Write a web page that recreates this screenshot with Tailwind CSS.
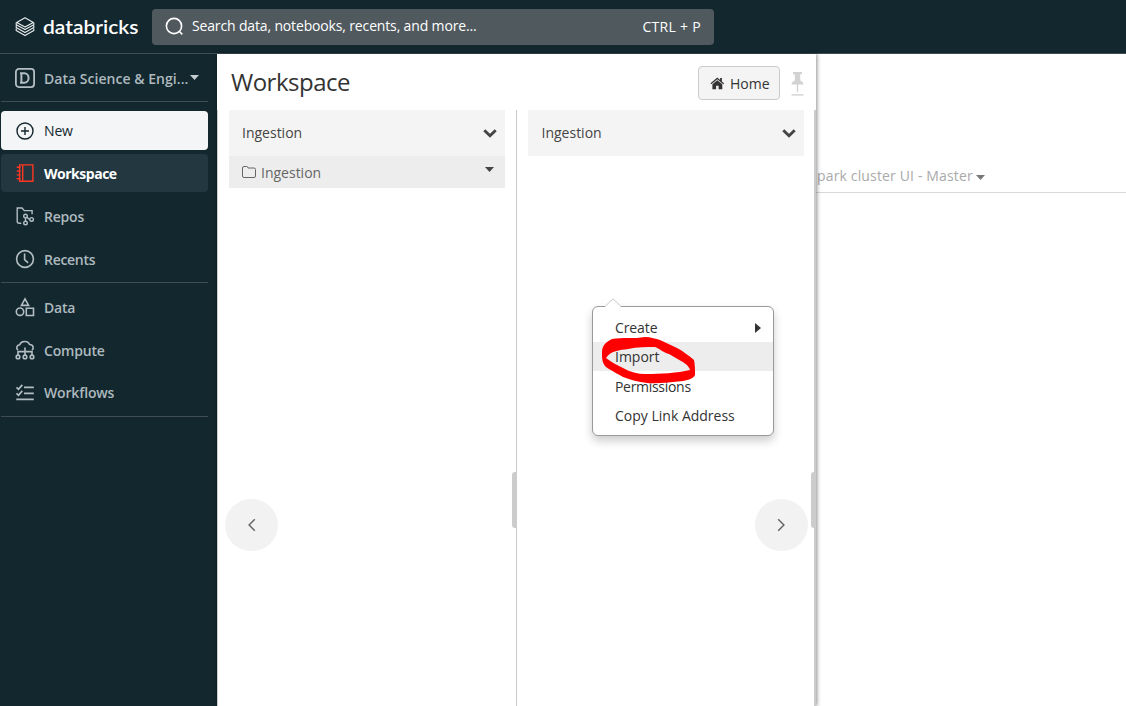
<!DOCTYPE html>
<html lang="en">
<head>
<meta charset="utf-8">
<title>Databricks Workspace</title>
<script src="https://cdn.jsdelivr.net/npm/@tailwindcss/browser@4"></script>
</head>
<body class="w-[1126px] h-[706px] overflow-hidden bg-white flex flex-col font-['Open_Sans','Noto_Sans',sans-serif] text-[14px] leading-5 text-[#333]">

<header class="h-[54px] shrink-0 bg-[#13272e] border-b border-[#3d4d53] flex items-start">
  <div class="w-[152px] h-[53px] pl-[15px] flex items-center gap-[8px]">
    <svg class="w-5 h-5 shrink-0" viewBox="0 0 20 20" fill="none" stroke="#e8ecee" stroke-width="1.15" stroke-linejoin="round">
      <path d="M10 .8 18.3 5.4 10 10 1.7 5.4Z"/>
      <path d="M1.2 5.5v2.3l8.8 4.8 8.8-4.8V5.5M1.2 8.4v2.2L10 15.4l8.8-4.8V8.4M1.2 11.4v2.2L10 18.6l8.8-5v-2.2"/>
    </svg>
    <svg class="w-[98px] h-[30px] shrink-0" viewBox="0 0 98 30"><text x="0" y="22" textLength="95.5" lengthAdjust="spacingAndGlyphs" fill="#fff" font-family="Lato, sans-serif" font-weight="600" font-size="20">databricks</text></svg>
  </div>
  <div class="mt-[9px] w-[562px] h-[36px] rounded-[4px] bg-[#50595e] flex items-center pl-[13px] pr-[13px] text-white">
    <svg class="w-[19px] h-[19px] shrink-0 -mt-[2px]" viewBox="0 0 19 19" fill="none" stroke="#fff" stroke-width="1.6"><circle cx="9" cy="9" r="7.6"/><path d="M14.2 14.2 17.3 17.4"/></svg>
    <span class="ml-[8px] -mt-[2px] tracking-[-0.15px] whitespace-nowrap">Search data, notebooks, recents, and more...</span>
    <span class="ml-auto -mt-px whitespace-nowrap tracking-[0.3px]">CTRL + P</span>
  </div>
</header>

<div class="flex-1 flex min-h-0">
  <aside class="w-[217px] shrink-0 bg-[#13272e] pl-px pr-[9px] text-[#adb9be] font-semibold">
    <div class="h-[48px] border-b border-[#3d4d53] pl-[14px] flex items-center">
      <svg class="w-5 h-5 shrink-0" viewBox="0 0 20 20" fill="none" stroke="#b3bec3"><rect x=".9" y=".9" width="18.2" height="18.2" rx="3" stroke-width="1.8"/><path d="M6.4 5.2h3a4.2 4.8 0 0 1 0 9.6h-3zM5 5.2h2M5 14.8h2" stroke-width="2"/></svg>
      <span class="ml-[9px] mt-[2px] w-[144px] tracking-[0.03px] whitespace-nowrap">Data Science &amp; Engi...</span>
      <svg class="w-[9px] h-[5px] ml-[2px] shrink-0" viewBox="0 0 9 5"><path d="M0 0h9L4.5 5z" fill="#c4ccd0"/></svg>
    </div>
    <nav class="pt-[9px]">
      <div class="h-[39px] rounded-[4px] bg-[#f4f5f7] text-[#13272e] pl-[14px] flex items-center gap-[9px]">
        <svg class="w-5 h-5" viewBox="0 0 20 20" fill="none" stroke="#13272e" stroke-width="1.4"><circle cx="10" cy="10" r="8"/><path d="M10 6v8M6 10h8"/></svg><span class="tracking-[-0.15px] font-medium">New</span>
      </div>
      <div class="mt-1 h-[38px] rounded-[4px] bg-[#223740] text-white font-bold pl-[14px] flex items-center gap-[9px]">
        <svg class="w-5 h-5" viewBox="0 0 20 20" fill="none" stroke="#ff3621" stroke-width="1.4"><path d="M4.6 1.9h13.3v16.3H4.6zM7.7 1.9v16.3M1.7 4.3h4M1.7 8.1h4M1.7 11.9h4M1.7 15.7h4"/></svg><span class="relative top-px tracking-[-0.48px]">Workspace</span>
      </div>
      <div class="mt-[5px] h-[38px] pl-[14px] flex items-center gap-[9px]">
        <svg class="w-5 h-5" viewBox="0 0 20 20" fill="none" stroke="#b3bec3" stroke-width="1.4"><path d="M6.3 17.3H4.2a2 2 0 0 1-2-2V2h4.9l2.2 2.6h7.8v3.6"/><circle cx="10.5" cy="10.1" r="1.8"/><circle cx="10.5" cy="17" r="1.8"/><circle cx="16.6" cy="13.4" r="1.8"/><path d="M10.5 11.9v3.3M12 11.2c.8 1.3 1.6 2 2.9 2.2"/></svg><span class="relative top-px tracking-[-0.2px]">Repos</span>
      </div>
      <div class="mt-[5px] h-[38px] pl-[14px] flex items-center gap-[9px]">
        <svg class="w-5 h-5" viewBox="0 0 20 20" fill="none" stroke="#b3bec3" stroke-width="1.6"><circle cx="10" cy="10" r="8.4"/><path d="M9.6 4.6v6l3.5 3.3"/></svg><span class="relative top-px tracking-[-0.3px]">Recents</span>
      </div>
    </nav>
    <div class="mt-[4px] border-t border-[#3d4d53] pt-[5px]">
      <div class="h-[38px] pl-[14px] flex items-center gap-[9px]">
        <svg class="w-5 h-5" viewBox="0 0 20 20" fill="none" stroke="#b3bec3" stroke-width="1.6"><path d="M10 1.8 13.6 8.4H6.4Z"/><circle cx="5" cy="14.7" r="3.7"/><path d="M11.3 11.3h7.2v7.2h-7.2z"/></svg><span class="relative top-px tracking-[-0.2px]">Data</span>
      </div>
      <div class="mt-[5px] h-[38px] pl-[14px] flex items-center gap-[9px]">
        <svg class="w-5 h-5" viewBox="0 0 20 20" fill="none" stroke="#b3bec3" stroke-width="1.6"><path d="M3 10.2C.8 8.6 1.6 5 4.7 4.8 6 1 12.6.1 14.6 4.5c3.8-.2 4.5 4.1 2.4 5.7"/><path d="M10 7.5v8M3 15.2v-3.6h14v3.6"/><circle cx="3" cy="16.9" r="1.8"/><circle cx="10" cy="16.9" r="1.8"/><circle cx="17" cy="16.9" r="1.8"/></svg><span class="relative top-px tracking-[-0.18px]">Compute</span>
      </div>
      <div class="mt-[5px] h-[38px] pl-[14px] flex items-center gap-[9px]">
        <svg class="w-5 h-5" viewBox="0 0 20 20" fill="none" stroke="#b3bec3" stroke-width="1.7"><path d="m1.5 4.3 2 2L7.3 1.9M1.5 10.3l2 2 3.8-4.4M9 4.3h9.8M9 10.3h9.8M1.3 16.4h17.5"/></svg><span class="tracking-[-0.15px]">Workflows</span>
      </div>
    </div>
    <div class="mt-[4px] border-t border-[#3d4d53]"></div>
  </aside>

  <main class="w-[599px] shrink-0 relative z-10 bg-white flex flex-col shadow-[1px_0_4px_rgba(0,0,0,0.45)]">
    <div class="h-[56px] shrink-0 flex items-center pl-[14px] pr-[12px]">
      <h1 class="text-[24px] leading-8 tracking-[-0.5px] font-normal">Workspace</h1>
      <button class="ml-auto mt-[2px] w-[82px] h-[34px] rounded-[4px] border border-[#ccc] bg-[#f4f4f4] flex items-center pl-[11px] gap-[6px]">
        <svg class="w-[15px] h-[13px]" viewBox="0 0 15 13" fill="#333"><path d="M7.3 3.2 2.4 7.3v4.9h3.7V8.8h2.5v3.4h3.7V7.3Z"/><path d="M7.3.6.5 6.3l.8.9 6-5 6 5 .8-.9-2.2-1.9V1.1h-1.8v1.8Z"/></svg>
        <span class="relative top-px -left-px">Home</span>
      </button>
      <svg class="w-[13px] h-[26px] ml-[11px] mt-[3px]" viewBox="0 0 13 26" fill="#d2d2d2"><path d="M2 1h9v2.2H9.2v6.2c2 .8 3.3 2.2 3.3 4.2H7.2v7.6H5.8v-7.6H.5c0-2 1.3-3.4 3.3-4.2V3.2H2z"/><path d="M.5 23.2h12v1.4H.5z"/></svg>
    </div>
    <div class="flex-1 flex">
      <section class="w-[300px] border-l border-r border-[#ccc] pl-[11px] pr-[11px]">
        <div class="h-[46px] bg-[#f4f4f4] flex items-center justify-between pl-[13px] pr-[8px] text-[#444]"><span>Ingestion</span>
          <svg class="w-[14px] h-[9px] mt-px" viewBox="0 0 14 9" fill="none" stroke="#444" stroke-width="2.9"><path d="m1.3 1.2 5.7 5.5 5.7-5.5"/></svg></div>
        <div class="h-[32px] bg-[#ededed] flex items-center pl-[13px] pr-[11px] text-[#666]">
          <svg class="w-[14px] h-[12px]" viewBox="0 0 14 12" fill="none" stroke="#666"><path d="M.5 2Q.5.5 2 .5h2.5Q6 .5 6 2h6q1.5 0 1.5 1.5V10q0 1.5-1.5 1.5H2Q.5 11.5.5 10Z"/></svg>
          <span class="ml-[5px] mt-[2px]">Ingestion</span>
          <svg class="w-[9px] h-[5px] ml-auto -mt-[5px]" viewBox="0 0 9 5"><path d="M0 0h9L4.5 5z" fill="#444"/></svg>
        </div>
      </section>
      <section class="w-[299px] border-r-2 border-[#ccc] pl-[11px] pr-[10px]">
        <div class="h-[46px] bg-[#f4f4f4] flex items-center justify-between pl-[13.5px] pr-[8px] text-[#444]"><span>Ingestion</span>
          <svg class="w-[14px] h-[9px] mt-px" viewBox="0 0 14 9" fill="none" stroke="#444" stroke-width="2.9"><path d="m1.3 1.2 5.7 5.5 5.7-5.5"/></svg></div>
      </section>
    </div>

    <div class="absolute left-[295px] top-[418px] w-[5px] h-[56px] rounded-l-[3px] bg-[#ccc]"></div>
    <div class="absolute left-[594px] top-[418px] w-[5px] h-[56px] rounded-l-[3px] bg-[#ccc]"></div>
    <div class="absolute left-[8px] top-[445px] w-[53px] h-[52px] rounded-full bg-[#f2f2f2] flex items-center justify-center"><svg class="w-[9px] h-[14px]" viewBox="0 0 9 14" fill="none" stroke="#666" stroke-width="1.5"><path d="M7.8 1.2 2.1 7l5.7 5.8"/></svg></div>
    <div class="absolute left-[538px] top-[445px] w-[53px] h-[52px] rounded-full bg-[#f2f2f2] flex items-center justify-center"><svg class="w-[9px] h-[14px]" viewBox="0 0 9 14" fill="none" stroke="#666" stroke-width="1.5"><path d="M1.2 1.2 6.9 7l-5.7 5.8"/></svg></div>

    <div class="absolute left-[375px] top-[252px] w-[182px] h-[130px] rounded-[6px] border border-[#999] bg-white shadow-[0_5px_10px_rgba(0,0,0,0.2)] pt-[6px]">
      <svg class="absolute left-[12px] -top-[9px] w-[16px] h-[10px]" viewBox="0 0 16 10"><path d="M0 10V8.5L8 .8l8 7.7V10z" fill="#fff"/><path d="M0 8.5 8 .8l8 7.7" fill="none" stroke="#c8c8c8"/></svg>
      <div class="h-[29px] pl-[22px] pr-[12px] flex items-center justify-between"><span class="tracking-[-0.1px]">Create</span><svg class="w-[6px] h-[10px]" viewBox="0 0 6 10"><path d="M0 0v10l6-5z" fill="#333"/></svg></div>
      <div class="h-[29px] pl-[22px] flex items-center bg-[#ededed]">Import</div>
      <div class="h-[30px] pl-[22px] pt-px flex items-center tracking-[-0.3px]">Permissions</div>
      <div class="h-[29px] pl-[22px] flex items-center">Copy Link Address</div>
    </div>
    <!-- hand-drawn marker ring around the Import item -->
    <svg class="absolute left-[383px] top-[281px] w-[98px] h-[50px]" viewBox="600 335 98 50" fill="#f00" fill-rule="evenodd"><path d="M602 353c0-6 2-10 10-14 10-2 22 0 33-2 6 0 11 2 15 3l17 8c6 3 12 8 17 12 1 4 1 11 1 15-1 3-6 5-12 6-12 1-25 3-36 2-9-1-16-3-24-6-7-4-11-6-17-10-4-4-4-9-4-14Zm4 5c5 4 11 7 17 10 7 4 15 6 22 6 16 0 32-1 45-4-1-4-5-7-9-9l-12-7c-5-1-9-5-14-7-8 0-18 0-27 2-8 1-18 2-22 9Z"/></svg>
  </main>

  <section class="flex-1">
    <div class="h-[139px] border-b border-[#d9d9d9] flex items-end pb-[6px] pl-px text-[#aaa]">
      <span class="leading-[20px] tracking-[0.15px] whitespace-nowrap">park cluster UI - Master</span>
      <svg class="w-[9px] h-[5px] mb-[6px] ml-[3px]" viewBox="0 0 9 5"><path d="M0 0h9L4.5 5z" fill="#777"/></svg>
    </div>
  </section>
</div>
</body>
</html>
